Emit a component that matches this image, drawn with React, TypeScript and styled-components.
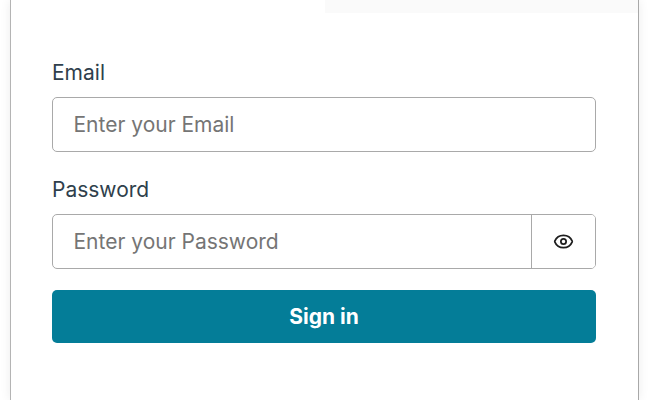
import { useState } from 'react';
import styled, { createGlobalStyle } from 'styled-components';
import { LuEye } from 'react-icons/lu';

const GlobalStyle = createGlobalStyle`
  html, body {
    margin: 0;
    height: 100%;
    overflow: hidden;
    background: #ffffff;
    font-family: "Inter", "Liberation Sans", sans-serif;
  }
`;

const Card = styled.div`
  box-sizing: border-box;
  width: 629px;
  height: 400px;
  margin-left: 10px;
  background: #ffffff;
  border-left: 1px solid #b4b4b4;
  border-right: 1px solid #a8a8a8;
  box-shadow: 0 0 10px rgba(0, 0, 0, 0.08);
`;

const TabStrip = styled.div`
  display: grid;
  grid-template-columns: 314px 1fr;
  height: 13px;
`;

const InactiveTab = styled.div`
  background: #fafafa;
  grid-column: 2;
`;

const Form = styled.form`
  display: flex;
  flex-direction: column;
  padding: 46px 42px 0 41px;
`;

const FieldGroup = styled.div`
  display: flex;
  flex-direction: column;
  margin-bottom: 24px;

  &:last-of-type {
    margin-bottom: 21px;
  }
`;

const Label = styled.label`
  font-size: 21px;
  line-height: 28px;
  color: #2f3f4c;
  margin-bottom: 10px;
`;

const Field = styled.div`
  display: flex;
  height: 55px;
  box-sizing: border-box;
  border: 1px solid #a9a9a9;
  border-radius: 5px;
  overflow: hidden;
`;

const Input = styled.input`
  flex: 1;
  min-width: 0;
  border: none;
  outline: none;
  padding: 0 21px 0 20.5px;
  font-family: inherit;
  font-size: 21px;
  color: #2f3f4c;
  background: transparent;

  &::placeholder {
    color: #757575;
    opacity: 1;
  }
`;

const EyeButton = styled.button`
  width: 64px;
  border: none;
  border-left: 1px solid #a9a9a9;
  background: #ffffff;
  color: #1f1f1f;
  display: flex;
  align-items: center;
  justify-content: center;
  padding: 0;
  cursor: pointer;
  font-size: 21px;
`;

const SubmitButton = styled.button`
  height: 53px;
  border: none;
  border-radius: 5px;
  background: #047d98;
  color: #ffffff;
  font-family: inherit;
  font-size: 21px;
  font-weight: 700;
  cursor: pointer;
`;

export default function App() {
  const [showPassword, setShowPassword] = useState(false);

  return (
    <>
      <GlobalStyle />
      <Card>
        <TabStrip>
          <InactiveTab />
        </TabStrip>
        <Form onSubmit={e => e.preventDefault()}>
          <FieldGroup>
            <Label htmlFor="email">Email</Label>
            <Field>
              <Input id="email" type="email" placeholder="Enter your Email" />
            </Field>
          </FieldGroup>
          <FieldGroup>
            <Label htmlFor="password">Password</Label>
            <Field>
              <Input
                id="password"
                type={showPassword ? 'text' : 'password'}
                placeholder="Enter your Password"
              />
              <EyeButton type="button" aria-label="Show password" onClick={() => setShowPassword(s => !s)}>
                <LuEye />
              </EyeButton>
            </Field>
          </FieldGroup>
          <SubmitButton type="submit">Sign in</SubmitButton>
        </Form>
      </Card>
    </>
  );
}
